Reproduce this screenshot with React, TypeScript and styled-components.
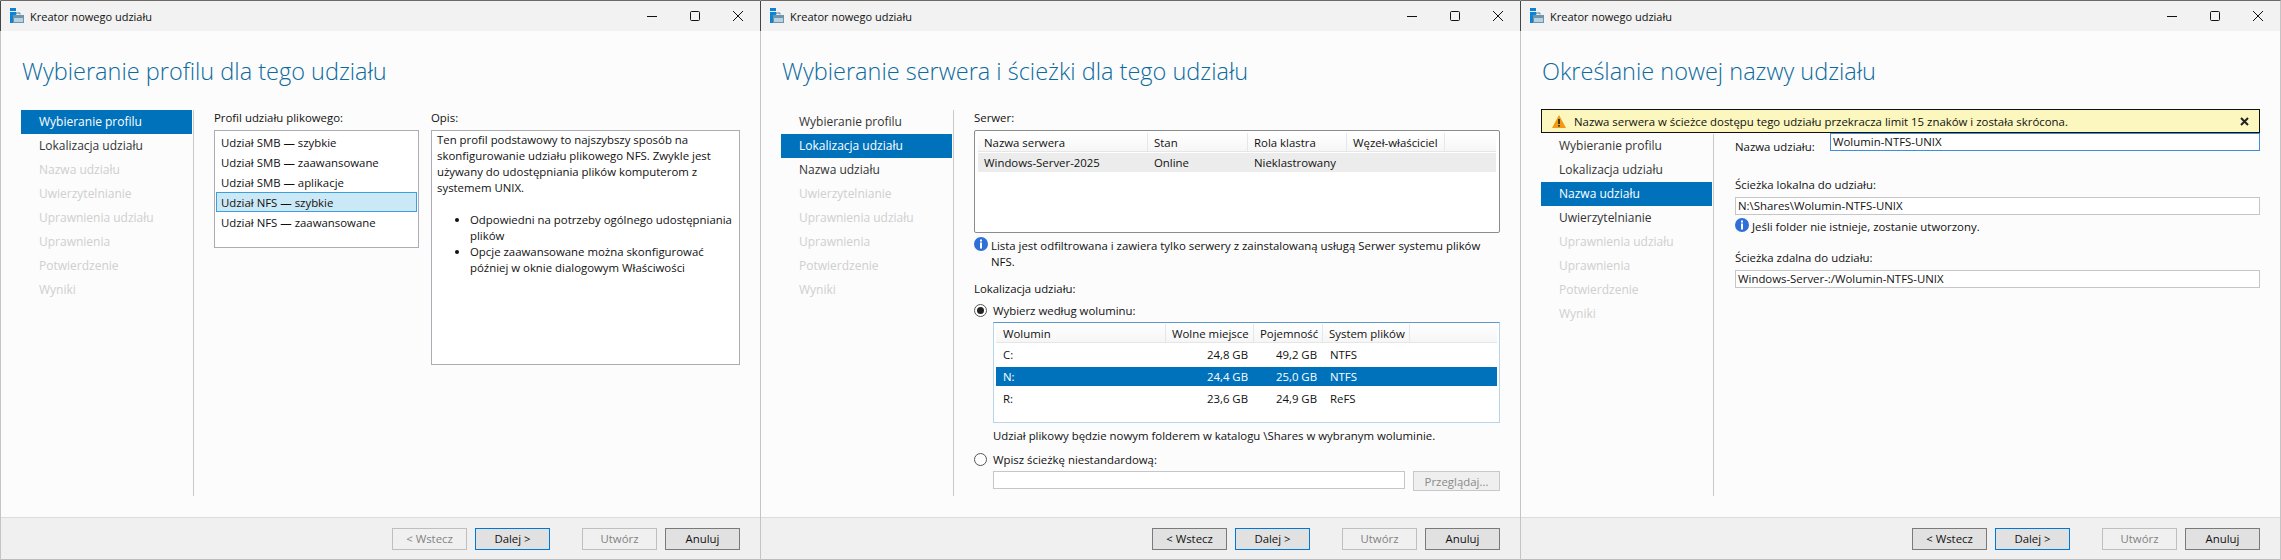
import React from "react";
import styled, { createGlobalStyle } from "styled-components";

const Global = createGlobalStyle`
  html, body { margin: 0; padding: 0; background: #fcfcfc; }
  * { box-sizing: border-box; }
`;

const Desktop = styled.div`
  display: flex;
  width: 2281px;
  height: 560px;
  overflow: hidden;
  font-family: "Open Sans", "Noto Sans", sans-serif;
  font-size: 11.4px;
  color: #111;
`;

const Window = styled.div<{ $last?: boolean }>`
  flex: 0 0 ${(p) => (p.$last ? 761 : 760)}px;
  height: 560px;
  display: flex;
  flex-direction: column;
  background: #fcfcfc;
  border-left: 1px solid #c4c4c4;
  border-right: ${(p) => (p.$last ? "1px solid #c4c4c4" : "0")};
  border-top: 1px solid #6e6a66;
`;

const TitleBar = styled.div`
  height: 30px;
  display: flex;
  align-items: center;
  background: #f2f2f2;
  box-shadow: -1px 0 0 #444;
  padding-left: 9px;
`;

const TitleText = styled.span`
  margin-left: 6px;
  font-size: 11px;
  color: #111;
`;

const Controls = styled.div`
  margin-left: auto;
  display: flex;
  align-items: center;
  padding-right: 16px;
  gap: 31px;
`;

const Heading = styled.h1`
  margin: 0;
  height: 79px;
  padding: 24px 0 0 21px;
  font-family: "Open Sans", sans-serif;
  font-size: 23.5px;
  line-height: 32px;
  font-weight: 300;
  color: #0b6a9e;
`;

const Main = styled.div<{ $h?: number }>`
  display: flex;
  height: ${(p) => p.$h ?? 386}px;
  padding-left: 20px;
`;

const Spacer = styled.div`
  flex: 1;
`;

const Nav = styled.div`
  flex: 0 0 173px;
  padding-right: 1px;
  border-right: 1px solid #c9c9c9;
`;

const NavItem = styled.div<{ $state: "on" | "done" | "off" }>`
  height: 24px;
  line-height: 24px;
  padding-left: 18px;
  font-size: 12px;
  background: ${(p) => (p.$state === "on" ? "#0072bc" : "transparent")};
  color: ${(p) => (p.$state === "on" ? "#fff" : p.$state === "done" ? "#333" : "#cfcfcf")};
`;

const Content = styled.div<{ $pl?: number }>`
  flex: 0 0 546px;
  padding: 0 0 0 ${(p) => p.$pl ?? 20}px;
`;

const Footer = styled.div`
  height: 43px;
  display: flex;
  align-items: center;
  justify-content: flex-end;
  padding-right: 20px;
  background: #f0f0f0;
  border-top: 1px solid #dcdcdc;
  border-bottom: 1px solid #bdbdbd;
`;

const Btn = styled.div<{ $kind?: "focus" | "off" | "normal"; $gap?: number }>`
  width: 75px;
  height: 22px;
  margin-left: ${(p) => p.$gap ?? 8}px;
  display: flex;
  align-items: center;
  justify-content: center;
  font-size: 11.4px;
  border: 1px solid
    ${(p) => (p.$kind === "focus" ? "#0078d7" : p.$kind === "off" ? "#bfbfbf" : "#7a7a7a")};
  background: ${(p) => (p.$kind === "off" ? "#f0f0f0" : "#e1e1e1")};
  color: ${(p) => (p.$kind === "off" ? "#838383" : "#111")};
`;

const Columns = styled.div`
  display: flex;
  gap: 12px;
`;

const Label = styled.div<{ $mt?: number }>`
  height: 16px;
  line-height: 16px;
  margin-top: ${(p) => p.$mt ?? 0}px;
`;

const ProfileCol = styled.div`
  flex: 0 0 205px;
`;
const DescCol = styled.div`
  flex: 0 0 309px;
`;

const ListBox = styled.div`
  margin-top: 4px;
  height: 118px;
  padding: 1px;
  border: 1px solid #abadb3;
  background: #fff;
`;

const ListRow = styled.div<{ $sel?: boolean }>`
  height: 20px;
  line-height: 20px;
  padding-left: 4px;
  border: 1px solid ${(p) => (p.$sel ? "#3aa0de" : "transparent")};
  background: ${(p) => (p.$sel ? "#cbe8f6" : "transparent")};
`;

const DescBox = styled.div`
  margin-top: 4px;
  height: 235px;
  padding: 1px 5px;
  border: 1px solid #abadb3;
  background: #fff;
  line-height: 16px;
`;

const DescList = styled.ul`
  margin: 16px 0 0;
  padding: 0 0 0 33px;
  list-style: disc;
  white-space: nowrap;
`;

const ServerBox = styled.div`
  margin-top: 4px;
  height: 103px;
  padding: 2px 3px;
  border: 1px solid #8c8c8c;
  border-radius: 2px;
  background: #fff;
`;

const HeaderRow = styled.div`
  display: flex;
  height: 19px;
  background: linear-gradient(#fff, #f6f6f6);
  border-bottom: 1px solid #e6e6e6;
`;

const HeadCell = styled.div<{ $w: number; $pad?: number }>`
  flex: 0 0 ${(p) => p.$w}px;
  padding-left: ${(p) => p.$pad ?? 6}px;
  line-height: 19px;
  white-space: nowrap;
  border-right: 1px solid #e3e8ee;
`;

const ServerRow = styled.div`
  display: flex;
  height: 19px;
  margin-top: 1px;
  background: #ececec;
`;

const Cell = styled.div<{ $w: number; $pad?: number; $right?: boolean }>`
  flex: 0 0 ${(p) => p.$w}px;
  padding: ${(p) => (p.$right ? `0 6px 0 0` : `0 0 0 ${p.$pad ?? 6}px`)};
  text-align: ${(p) => (p.$right ? "right" : "left")};
  line-height: 19px;
  white-space: nowrap;
`;

const InfoLine = styled.div<{ $mt?: number }>`
  display: flex;
  gap: 3px;
  margin-top: ${(p) => p.$mt ?? 5}px;
  line-height: 16px;
`;

const InfoSvg = styled.svg`
  flex: 0 0 14px;
  margin-top: -1px;
`;

const RadioRow = styled.div<{ $mt: number }>`
  display: flex;
  align-items: center;
  gap: 6px;
  height: 16px;
  margin-top: ${(p) => p.$mt}px;
`;

const Radio = styled.span<{ $on?: boolean }>`
  flex: 0 0 13px;
  height: 13px;
  display: flex;
  align-items: center;
  justify-content: center;
  border: 1px solid #555;
  border-radius: 50%;
  background: #fff;
  &::after {
    content: "";
    width: 7px;
    height: 7px;
    border-radius: 50%;
    background: ${(p) => (p.$on ? "#222" : "transparent")};
  }
`;

const Indented = styled.div`
  margin-left: 19px;
`;

const VolumeBox = styled.div`
  margin-top: 4px;
  height: 101px;
  padding: 1px 2px;
  border: 1px solid #b7d5ea;
  border-top-color: #5b9bc9;
  background: #fff;
`;

const VolumeRow = styled.div<{ $sel?: boolean }>`
  display: flex;
  height: 22px;
  align-items: center;
  color: ${(p) => (p.$sel ? "#fff" : "inherit")};
`;

const VolumeInner = styled.div<{ $sel?: boolean }>`
  display: flex;
  width: 100%;
  height: 19px;
  background: ${(p) => (p.$sel ? "#0072bc" : "transparent")};
`;

const PathRow = styled.div`
  display: flex;
  gap: 8px;
  margin-top: 4px;
`;

const Input = styled.div<{ $focus?: boolean; $mt?: number; $w?: number }>`
  height: 18px;
  ${(p) => (p.$w ? `flex: 0 0 ${p.$w}px;` : "flex: 1;")}
  margin-top: ${(p) => p.$mt ?? 0}px;
  padding-left: 2px;
  line-height: 16px;
  white-space: nowrap;
  background: #fff;
  border: 1px solid ${(p) => (p.$focus ? "#3d8fdc" : "#c6c6c6")};
`;

const Browse = styled.div`
  flex: 0 0 87px;
  height: 20px;
  display: flex;
  align-items: center;
  justify-content: center;
  color: #8a8a8a;
  background: #efefef;
  border: 1px solid #c8c8c8;
`;

const Banner = styled.div`
  display: flex;
  align-items: center;
  height: 24px;
  margin: -1px 0 1px 20px;
  width: 719px;
  padding-left: 10px;
  background: #fbf7bf;
  border: 1px solid #111;
  white-space: nowrap;
  position: relative;
  z-index: 1;
`;

const BannerText = styled.span`
  margin-left: 8px;
`;

const BannerClose = styled.span`
  margin-left: auto;
  padding-right: 10px;
  display: flex;
`;

const NameRow = styled.div`
  display: flex;
  align-items: flex-start;
`;

const NameLabel = styled.div`
  flex: 0 0 95px;
  padding-top: 5px;
  line-height: 16px;
`;

const Full = styled.div`
  display: flex;
`;

const TitleIcon = () => (
  <svg width="14" height="16" viewBox="0 0 14 16">
    <rect x="0" y="0" width="6" height="3" fill="#0a84d6" />
    <rect x="0" y="4" width="3" height="11" fill="#0a84d6" />
    <rect x="3" y="4" width="3" height="3" fill="#0a84d6" />
    <path d="M6 6.5V5h4v1.5" fill="none" stroke="#5a7f99" />
    <rect x="3" y="7" width="11" height="8" fill="#6d93ad" />
    <rect x="4" y="10" width="9" height="4" fill="#b9d0df" />
  </svg>
);

const WindowControls = () => (
  <Controls>
    <svg width="12" height="12" viewBox="0 0 12 12">
      <path d="M1 6.5h10" stroke="#111" strokeWidth="1" />
    </svg>
    <svg width="12" height="12" viewBox="0 0 12 12">
      <rect x="1.5" y="1.5" width="9" height="9" rx="1" fill="none" stroke="#111" />
    </svg>
    <svg width="12" height="12" viewBox="0 0 12 12">
      <path d="M1 1l10 10M11 1L1 11" stroke="#111" strokeWidth="1" />
    </svg>
  </Controls>
);

const InfoIcon = () => (
  <InfoSvg width="14" height="14" viewBox="0 0 14 14">
    <circle cx="7" cy="7" r="7" fill="#2f6fd8" />
    <rect x="6" y="2.5" width="2" height="2" fill="#fff" />
    <rect x="6" y="5.5" width="2" height="6" fill="#fff" />
  </InfoSvg>
);

const WarnIcon = () => (
  <svg width="14" height="13" viewBox="0 0 14 13">
    <path d="M7 0l7 13H0z" fill="#f29a12" />
    <rect x="6.2" y="4" width="1.6" height="5" fill="#222" />
    <rect x="6.2" y="10" width="1.6" height="1.6" fill="#222" />
  </svg>
);

const steps = [
  "Wybieranie profilu",
  "Lokalizacja udziału",
  "Nazwa udziału",
  "Uwierzytelnianie",
  "Uprawnienia udziału",
  "Uprawnienia",
  "Potwierdzenie",
  "Wyniki",
];

const Steps = ({ current }: { current: number }) => (
  <Nav>
    {steps.map((s, i) => (
      <NavItem key={s} $state={i === current ? "on" : i <= current + 1 ? "done" : "off"}>
        {s}
      </NavItem>
    ))}
  </Nav>
);

const Buttons = ({ backOff }: { backOff?: boolean }) => (
  <Footer>
    <Btn $kind={backOff ? "off" : "normal"}>&lt; Wstecz</Btn>
    <Btn $kind="focus">Dalej &gt;</Btn>
    <Btn $kind="off" $gap={32}>Utwórz</Btn>
    <Btn>Anuluj</Btn>
  </Footer>
);

const Chrome = ({ last, children }: { last?: boolean; children: React.ReactNode }) => (
  <Window $last={last}>
    <TitleBar>
      <TitleIcon />
      <TitleText>Kreator nowego udziału</TitleText>
      <WindowControls />
    </TitleBar>
    {children}
  </Window>
);

const profiles = [
  "Udział SMB — szybkie",
  "Udział SMB — zaawansowane",
  "Udział SMB — aplikacje",
  "Udział NFS — szybkie",
  "Udział NFS — zaawansowane",
];

const volumes = [
  ["C:", "24,8 GB", "49,2 GB", "NTFS"],
  ["N:", "24,4 GB", "25,0 GB", "NTFS"],
  ["R:", "23,6 GB", "24,9 GB", "ReFS"],
];

export default function App() {
  return (
    <>
      <Global />
      <Desktop>
        <Chrome>
          <Heading>Wybieranie profilu dla tego udziału</Heading>
          <Main>
            <Steps current={0} />
            <Content>
              <Columns>
                <ProfileCol>
                  <Label>Profil udziału plikowego:</Label>
                  <ListBox>
                    {profiles.map((p, i) => (
                      <ListRow key={p} $sel={i === 3}>{p}</ListRow>
                    ))}
                  </ListBox>
                </ProfileCol>
                <DescCol>
                  <Label>Opis:</Label>
                  <DescBox>
                    Ten profil podstawowy to najszybszy sposób na skonfigurowanie udziału plikowego NFS. Zwykle jest używany do udostępniania plików komputerom z systemem UNIX.
                    <DescList>
                      <li>Odpowiedni na potrzeby ogólnego udostępniania<br />plików</li>
                      <li>Opcje zaawansowane można skonfigurować<br />później w oknie dialogowym Właściwości</li>
                    </DescList>
                  </DescBox>
                </DescCol>
              </Columns>
            </Content>
          </Main>
          <Spacer />
          <Buttons backOff />
        </Chrome>

        <Chrome>
          <Heading>Wybieranie serwera i ścieżki dla tego udziału</Heading>
          <Main>
            <Steps current={1} />
            <Content>
              <Label>Serwer:</Label>
              <ServerBox>
                <HeaderRow>
                  <HeadCell $w={170}>Nazwa serwera</HeadCell>
                  <HeadCell $w={100}>Stan</HeadCell>
                  <HeadCell $w={99}>Rola klastra</HeadCell>
                  <HeadCell $w={98}>Węzeł-właściciel</HeadCell>
                </HeaderRow>
                <ServerRow>
                  <Cell $w={170}>Windows-Server-2025</Cell>
                  <Cell $w={100}>Online</Cell>
                  <Cell $w={99}>Nieklastrowany</Cell>
                </ServerRow>
              </ServerBox>
              <InfoLine>
                <InfoIcon />
                <span>Lista jest odfiltrowana i zawiera tylko serwery z zainstalowaną usługą Serwer systemu plików NFS.</span>
              </InfoLine>
              <Label $mt={11}>Lokalizacja udziału:</Label>
              <RadioRow $mt={5}>
                <Radio $on />
                Wybierz według woluminu:
              </RadioRow>
              <Indented>
                <VolumeBox>
                  <HeaderRow>
                    <HeadCell $w={170} $pad={7}>Wolumin</HeadCell>
                    <HeadCell $w={88}>Wolne miejsce</HeadCell>
                    <HeadCell $w={69}>Pojemność</HeadCell>
                    <HeadCell $w={87}>System plików</HeadCell>
                  </HeaderRow>
                  {volumes.map((v, i) => (
                    <VolumeRow key={v[0]} $sel={i === 1}>
                      <VolumeInner $sel={i === 1}>
                        <Cell $w={170} $pad={7}>{v[0]}</Cell>
                        <Cell $w={88} $right>{v[1]}</Cell>
                        <Cell $w={69} $right>{v[2]}</Cell>
                        <Cell $w={87} $pad={7}>{v[3]}</Cell>
                      </VolumeInner>
                    </VolumeRow>
                  ))}
                </VolumeBox>
                <Label $mt={5}>Udział plikowy będzie nowym folderem w katalogu \Shares w wybranym woluminie.</Label>
              </Indented>
              <RadioRow $mt={7}>
                <Radio />
                Wpisz ścieżkę niestandardową:
              </RadioRow>
              <Indented>
                <PathRow>
                  <Input $w={412} />
                  <Browse>Przeglądaj...</Browse>
                </PathRow>
              </Indented>
            </Content>
          </Main>
          <Spacer />
          <Buttons />
        </Chrome>

        <Chrome last>
          <Heading>Określanie nowej nazwy udziału</Heading>
          <Banner>
            <WarnIcon />
            <BannerText>Nazwa serwera w ścieżce dostępu tego udziału przekracza limit 15 znaków i została skrócona.</BannerText>
            <BannerClose>
              <svg width="9" height="9" viewBox="0 0 9 9">
                <path d="M1 1l7 7M8 1L1 8" stroke="#222" strokeWidth="2" />
              </svg>
            </BannerClose>
          </Banner>
          <Main $h={362}>
            <Steps current={2} />
            <Content $pl={21}>
              <NameRow>
                <NameLabel>Nazwa udziału:</NameLabel>
                <Input $focus $mt={-1}>Wolumin-NTFS-UNIX</Input>
              </NameRow>
              <Label $mt={22}>Ścieżka lokalna do udziału:</Label>
              <Full>
                <Input $mt={4}>N:\Shares\Wolumin-NTFS-UNIX</Input>
              </Full>
              <InfoLine $mt={4}>
                <InfoIcon />
                <span>Jeśli folder nie istnieje, zostanie utworzony.</span>
              </InfoLine>
              <Label $mt={15}>Ścieżka zdalna do udziału:</Label>
              <Full>
                <Input $mt={4}>Windows-Server-:/Wolumin-NTFS-UNIX</Input>
              </Full>
            </Content>
          </Main>
          <Spacer />
          <Buttons />
        </Chrome>
      </Desktop>
    </>
  );
}
